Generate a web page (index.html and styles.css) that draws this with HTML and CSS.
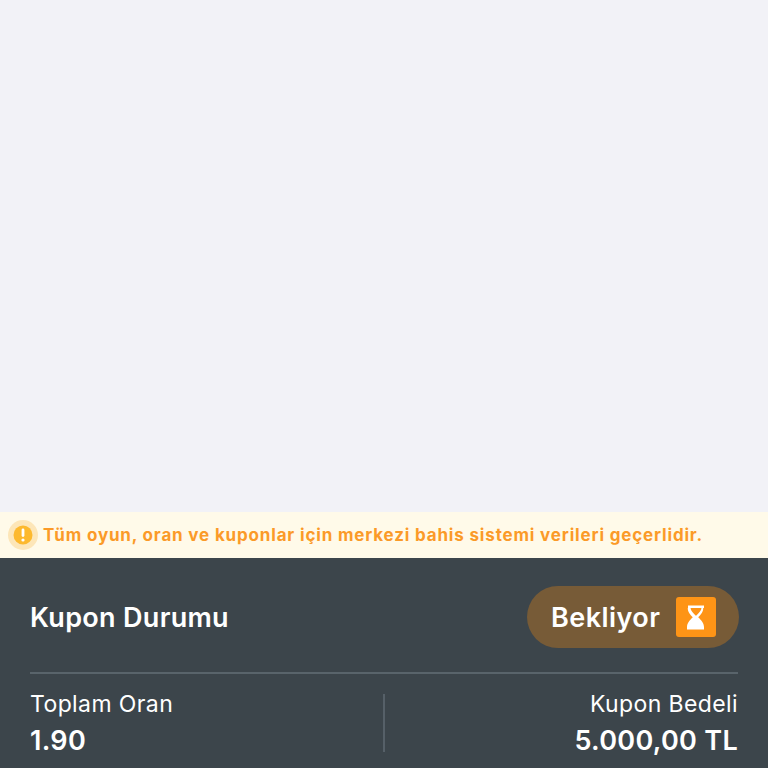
FILE: index.html
```html
<!doctype html>
<html>
<head>
    <title>Kupon Durumu</title>
    <link rel="stylesheet" href="styles.css">
    <meta name="viewport" content="width=device-width, initial-scale=1.0">
</head>
<body>
    <div class="content"></div>
    <div class="notice">
        <span class="notice-icon">
            <svg width="30" height="30" viewBox="0 0 30 30">
                <circle cx="15" cy="15" r="15" fill="#fde6b8"/>
                <circle cx="15" cy="15" r="9.5" fill="#fdb92e"/>
                <rect x="13.6" y="8.6" width="2.8" height="8.4" rx="1.4" fill="#fff"/>
                <circle cx="15" cy="20" r="1.6" fill="#fff"/>
            </svg>
        </span>
        <span class="notice-text">Tüm oyun, oran ve kuponlar için merkezi bahis sistemi verileri geçerlidir.</span>
    </div>
    <div class="panel">
        <div class="status-row">
            <h2 class="status-title">Kupon Durumu</h2>
            <div class="status-pill">
                <span class="status-label">Bekliyor</span>
                <span class="status-icon">
                    <svg width="18" height="25" viewBox="0 0 18 25">
                        <path fill="#fff" fill-rule="evenodd" d="M1 0.500h16v2.500h-0.800c0.300 3.300-2.300 6.700-5 9.300 2.900 2.700 5.800 6.200 5.800 9.700v2.500H0V22c0-3.500 2.900-7 5.800-9.700-2.700-2.600-5.300-6-5-9.300H1z M3.600 3c0 2.600 3 5.600 5.400 7.800 2.400-2.200 5.400-5.200 5.400-7.800z"/>
                    </svg>
                </span>
            </div>
        </div>
        <div class="stats">
            <div class="stat">
                <span class="stat-label">Toplam Oran</span>
                <span class="stat-value">1.90</span>
            </div>
            <div class="stat stat-right">
                <span class="stat-label">Kupon Bedeli</span>
                <span class="stat-value">5.000,00 TL</span>
            </div>
        </div>
    </div>
</body>
</html>
```

FILE: styles.css
```css
html, body {
    margin: 0;
    padding: 0;
}
body {
    font-family: Inter, "Noto Sans", sans-serif;
    background-color: #f2f2f7;
    height: 768px;
    overflow: hidden;
    display: flex;
    flex-direction: column;
}
.content {
    height: 512px;
}
.notice {
    height: 46px;
    background-color: #fffae9;
    display: flex;
    align-items: center;
    gap: 5px;
    padding-left: 8px;
}
.notice-icon {
    display: flex;
}
.notice-text {
    color: #fb9a28;
    font-size: 17px;
    font-weight: 700;
    letter-spacing: 0.83px;
}
.panel {
    flex: 1;
    background-color: #3c454b;
    padding: 28px 30px 0 30px;
    color: #fff;
}
.status-row {
    display: flex;
    justify-content: space-between;
    align-items: center;
    padding-bottom: 24px;
    border-bottom: 2px solid #59646b;
}
.status-title {
    margin: 0;
    font-size: 27px;
    font-weight: 600;
    letter-spacing: 0.3px;
}
.status-pill {
    display: flex;
    align-items: center;
    gap: 16px;
    width: 212px;
    height: 62px;
    box-sizing: border-box;
    padding-left: 24px;
    margin-right: -1px;
    background-color: #775b37;
    border-radius: 31px;
}
.status-label {
    font-size: 27px;
    font-weight: 600;
    letter-spacing: 0.45px;
}
.status-icon {
    width: 40px;
    height: 40px;
    background-color: #fe9416;
    border-radius: 3px;
    display: flex;
    align-items: center;
    justify-content: center;
}
.stats {
    display: grid;
    grid-template-columns: 353px 1fr;
    margin-top: 20px;
}
.stat {
    display: flex;
    flex-direction: column;
    gap: 11px;
    height: 58px;
}
.stat-right {
    align-items: flex-end;
    border-left: 2px solid #566068;
}
.stat-label {
    font-size: 23px;
    line-height: 20px;
    font-weight: 400;
    letter-spacing: 0.4px;
}
.stat-value {
    font-size: 27px;
    line-height: 32px;
    font-weight: 600;
    letter-spacing: 0.3px;
}
```
